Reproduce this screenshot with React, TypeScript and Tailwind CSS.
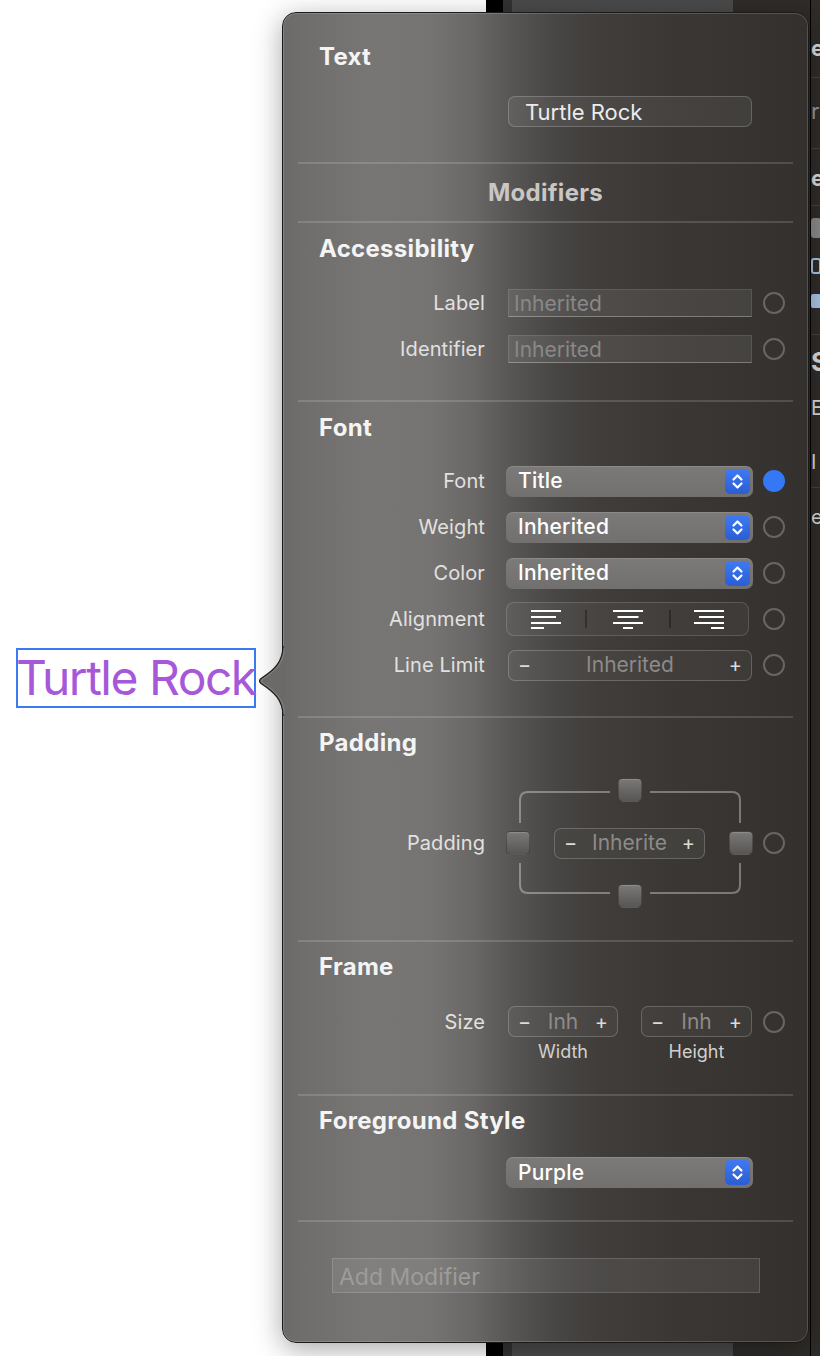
import React from "react";

function Circle({ filled }: { filled?: boolean }) {
  if (filled) return <div className="w-[22px] h-[22px] shrink-0 rounded-full bg-[#3478f6]" />;
  return <div className="w-[22px] h-[22px] shrink-0 rounded-full border-2 border-[#686563]" />;
}

function Label({ children }: { children: React.ReactNode }) {
  return (
    <div className="w-[202px] shrink-0 text-right text-[20px] leading-[24px] tracking-[0.1px] text-[#e2e1e0]">
      {children}
    </div>
  );
}

function Heading({ children, className = "" }: { children: React.ReactNode; className?: string }) {
  return (
    <div className={"pl-[36px] h-[28px] text-[24px] leading-[28px] tracking-[0.3px] font-bold text-[#f4f4f4] " + className}>
      {children}
    </div>
  );
}

function Divider({ className = "" }: { className?: string }) {
  return <div className={"ml-[15px] w-[495px] h-[2px] bg-white/15 " + className} />;
}

function Chevrons() {
  return (
    <div className="w-[25px] h-[25px] shrink-0 rounded-[5px] bg-gradient-to-b from-[#3f7af2] to-[#2b5dd4] flex items-center justify-center">
      <svg width="25" height="25" viewBox="0 0 25 25" fill="none" stroke="white" strokeWidth="2.2" strokeLinecap="round" strokeLinejoin="round">
        <path d="M8.5 10.5 L12.5 6.5 L16.5 10.5" />
        <path d="M8.5 14.5 L12.5 18.5 L16.5 14.5" />
      </svg>
    </div>
  );
}

function Popup({ value }: { value: string }) {
  return (
    <div className="w-[247px] h-[31px] rounded-[7px] bg-gradient-to-b from-[#7c7a78] to-[#72706e] shadow-[inset_0_1px_0_rgba(255,255,255,0.12)] flex items-center pl-[12px] pr-[3px]">
      <span className="flex-1 text-[21px] leading-[26px] font-medium tracking-[0.2px] text-white">{value}</span>
      <Chevrons />
    </div>
  );
}

function Stepper({ value, w, className = "" }: { value: string; w: string; className?: string }) {
  return (
    <div className={w + " h-[31px] rounded-[7px] border border-white/20 bg-white/[0.04] flex items-center px-[9px] text-[20px] leading-[24px] " + className}>
      <span className="text-[#dcdbda]">−</span>
      <span className="flex-1 text-center text-[21px] text-[#8d8b89]">{value}</span>
      <span className="text-[#dcdbda]">+</span>
    </div>
  );
}

function AlignIcon({ kind }: { kind: "left" | "center" | "right" }) {
  const lines: [number, number][] =
    kind === "left"
      ? [[0, 30], [0, 25], [0, 30], [0, 13]]
      : kind === "center"
      ? [[0, 30], [4.5, 25.5], [0, 30], [10, 20]]
      : [[0, 30], [5, 30], [0, 30], [17, 30]];
  const ys = [2, 8, 14, 19];
  return (
    <svg width="30" height="21" viewBox="0 0 30 21" stroke="white" strokeWidth="2">
      {lines.map(([a, b], i) => (
        <line key={i} x1={a} x2={b} y1={ys[i]} y2={ys[i]} />
      ))}
    </svg>
  );
}

function Square() {
  return (
    <div className="w-[24px] h-[24px] rounded-[5px] border border-black/25 bg-gradient-to-b from-[#7b7977] to-[#585654] shadow-[inset_0_1px_0_rgba(255,255,255,0.15)]" />
  );
}

function InheritedField() {
  return (
    <div className="ml-[23px] w-[244px] h-[28px] bg-white/[0.08] border border-white/10 border-b-white/30 flex items-center pl-[5px] pt-[2px] text-[21px] leading-[24px] text-[#8a8886]">
      Inherited
    </div>
  );
}

function Arrow() {
  return (
    <svg className="absolute left-[-25px] top-[633px]" width="28" height="70" viewBox="0 0 28 70">
      <path d="M25 0 C25 16 16 24 3 32.5 Q0 35 3 37.5 C16 46 25 54 25 70 L28 70 L28 0 Z" fill="#6b6a68" />
      <path d="M25 0 C25 16 16 24 3 32.5 Q0 35 3 37.5 C16 46 25 54 25 70" fill="none" stroke="#1c1b1a" strokeWidth="1.2" />
      <path d="M26.2 2 C26.2 17 17 25 4.5 33.3 Q2.5 35 4.5 36.7 C17 45 26.2 53 26.2 68" fill="none" stroke="rgba(255,255,255,0.18)" strokeWidth="1" />
    </svg>
  );
}

export default function App() {
  return (
    <div className="relative w-[820px] h-[1356px] overflow-hidden bg-white [font-family:Inter,'Noto_Sans',sans-serif]">
      {/* window behind */}
      <div className="absolute left-[486px] top-0 bottom-0 right-0 flex">
        <div className="w-[17px] bg-black" />
        <div className="w-[9px] bg-[#333333]" />
        <div className="w-[221px] bg-[#4b4b4b]" />
        <div className="w-[77px] bg-[#2f2c29]" />
        <div className="w-[1px] bg-black" />
        <div className="flex-1 bg-[#2f2c29] overflow-hidden flex flex-col text-[#dcdad8] font-bold text-[22px] leading-[26px] whitespace-nowrap">
          <div className="mt-[35px]">e</div>
          <div className="mt-[16px] h-px bg-white/10" />
          <div className="mt-[20px] font-normal text-[#9a9896]">r</div>
          <div className="mt-[24px] h-px bg-white/10" />
          <div className="mt-[16px]">et</div>
          <div className="mt-[14px] h-px bg-white/10" />
          <div className="mt-[12px] w-[10px] h-[20px] rounded-[3px] bg-[#8c8a88]" />
          <div className="mt-[20px] w-[10px] h-[16px] rounded-[3px] border-2 border-[#a9c4e6]" />
          <div className="mt-[20px] w-[10px] h-[14px] rounded-[2px] bg-[#a9c4e6]" />
          <div className="mt-[26px] h-px bg-white/10" />
          <div className="mt-[14px] text-[26px]">S</div>
          <div className="mt-[20px] font-normal text-[20px]">Er</div>
          <div className="mt-[28px] font-normal text-[20px]">I</div>
          <div className="mt-[12px] h-px bg-white/10" />
          <div className="mt-[16px] font-normal text-[20px]">er</div>
        </div>
      </div>

      {/* canvas label */}
      <div className="absolute left-[16px] top-[648px] w-[240px] h-[60px] border-2 border-[#3b7bf1] flex items-center">
        <span className="-ml-[2px] text-[48px] leading-[56px] tracking-[-1.5px] text-[#a657da] whitespace-nowrap">Turtle Rock</span>
      </div>

      {/* popover */}
      <div className="absolute left-[282px] top-[12px] w-[527px] h-[1331px] rounded-[14px] border border-[#1b1a19] shadow-[0_6px_28px_rgba(0,0,0,0.35)] bg-[linear-gradient(90deg,#6c6b69_0%,#777674_16%,#767473_28%,#6a6866_36%,#575553_44%,#484644_52%,#403d3b_60%,#3a3734_74%,#34302d_100%)]">
        <div className="absolute inset-0 rounded-[13px] shadow-[inset_0_0_0_1px_rgba(255,255,255,0.16)] pointer-events-none" />
        <Arrow />
        <div className="relative flex flex-col">
          <Heading className="mt-[30px]">Text</Heading>
          <div className="mt-[25px] ml-[225px] w-[244px] h-[31px] rounded-[7px] border border-white/20 bg-white/[0.06] flex items-center pl-[16px] text-[22px] leading-[26px] text-[#ebebeb]">
            Turtle Rock
          </div>
          <Divider className="mt-[35px]" />
          <div className="mt-[15px] h-[28px] text-center text-[24px] leading-[28px] tracking-[0.3px] font-bold text-[#c9c7c5]">Modifiers</div>
          <Divider className="mt-[14px]" />

          <Heading className="mt-[12px]">Accessibility</Heading>
          <div className="mt-[26px] h-[28px] flex items-center">
            <Label>Label</Label>
            <InheritedField />
            <div className="ml-[11px]"><Circle /></div>
          </div>
          <div className="mt-[18px] h-[28px] flex items-center">
            <Label>Identifier</Label>
            <InheritedField />
            <div className="ml-[11px]"><Circle /></div>
          </div>
          <Divider className="mt-[37px]" />

          <Heading className="mt-[12px]">Font</Heading>
          <div className="mt-[16px] flex flex-col">
            <div className="h-[46px] flex items-center">
              <Label>Font</Label>
              <div className="ml-[21px]"><Popup value="Title" /></div>
              <div className="ml-[10px]"><Circle filled /></div>
            </div>
            <div className="h-[46px] flex items-center">
              <Label>Weight</Label>
              <div className="ml-[21px]"><Popup value="Inherited" /></div>
              <div className="ml-[10px]"><Circle /></div>
            </div>
            <div className="h-[46px] flex items-center">
              <Label>Color</Label>
              <div className="ml-[21px]"><Popup value="Inherited" /></div>
              <div className="ml-[10px]"><Circle /></div>
            </div>
            <div className="h-[46px] flex items-center">
              <Label>Alignment</Label>
              <div className="ml-[21px] w-[243px] h-[34px] rounded-[8px] border border-white/15 bg-white/[0.04] flex items-center">
                <div className="flex-1 flex justify-center"><AlignIcon kind="left" /></div>
                <div className="w-[2px] h-[18px] bg-black/30" />
                <div className="w-[82px] flex justify-center"><AlignIcon kind="center" /></div>
                <div className="w-[2px] h-[18px] bg-black/30" />
                <div className="flex-1 flex justify-center"><AlignIcon kind="right" /></div>
              </div>
              <div className="ml-[14px]"><Circle /></div>
            </div>
            <div className="h-[46px] flex items-center">
              <Label>Line Limit</Label>
              <Stepper value="Inherited" w="w-[244px]" className="ml-[23px]" />
              <div className="ml-[11px]"><Circle /></div>
            </div>
          </div>
          <Divider className="mt-[28px]" />

          <Heading className="mt-[11px]">Padding</Heading>
          <div className="mt-[21px] flex items-center">
            <Label>Padding</Label>
            <div className="relative ml-[21px] w-[247px] h-[130px] flex flex-col items-center justify-between">
              <svg className="absolute inset-0" width="247" height="130" viewBox="0 0 247 130" fill="none" stroke="rgba(255,255,255,0.34)" strokeWidth="2">
                <path d="M104 14 H22 Q14 14 14 22 V45" />
                <path d="M144 14 H226 Q234 14 234 22 V45" />
                <path d="M14 85 V107 Q14 115 22 115 H104" />
                <path d="M234 85 V107 Q234 115 226 115 H144" />
              </svg>
              <div className="relative"><Square /></div>
              <div className="relative w-full flex items-center justify-between">
                <Square />
                <div className="w-[151px] h-[31px] rounded-[7px] border border-white/20 bg-[#4a4745]/60 flex items-center px-[9px] text-[20px] leading-[24px]">
                  <span className="text-[#dcdbda]">−</span>
                  <span className="flex-1 text-center text-[21px] text-[#8d8b89]">Inherite</span>
                  <span className="text-[#dcdbda]">+</span>
                </div>
                <Square />
              </div>
              <div className="relative"><Square /></div>
            </div>
            <div className="ml-[10px]"><Circle /></div>
          </div>
          <Divider className="mt-[32px]" />

          <Heading className="mt-[11px]">Frame</Heading>
          <div className="mt-[25px] flex items-start">
            <div className="h-[31px] flex items-center"><Label>Size</Label></div>
            <div className="ml-[23px] w-[110px] flex flex-col items-center">
              <Stepper value="Inh" w="w-[110px]" />
              <div className="mt-[5px] text-[18px] leading-[20px] text-[#d2d0ce]">Width</div>
            </div>
            <div className="ml-[23px] w-[111px] flex flex-col items-center">
              <Stepper value="Inh" w="w-[111px]" />
              <div className="mt-[5px] text-[18px] leading-[20px] text-[#d2d0ce]">Height</div>
            </div>
            <div className="ml-[11px] h-[31px] flex items-center"><Circle /></div>
          </div>
          <Divider className="mt-[32px]" />

          <Heading className="mt-[11px]">Foreground Style</Heading>
          <div className="mt-[22px] ml-[223px]"><Popup value="Purple" /></div>
          <Divider className="mt-[32px]" />

          <div className="mt-[36px] ml-[49px] w-[428px] h-[35px] bg-white/[0.07] border border-white/15 flex items-center pl-[6px] pt-[2px] text-[23px] leading-[28px] text-[#9e9c9a]">
            Add Modifier
          </div>
        </div>
      </div>
    </div>
  );
}
